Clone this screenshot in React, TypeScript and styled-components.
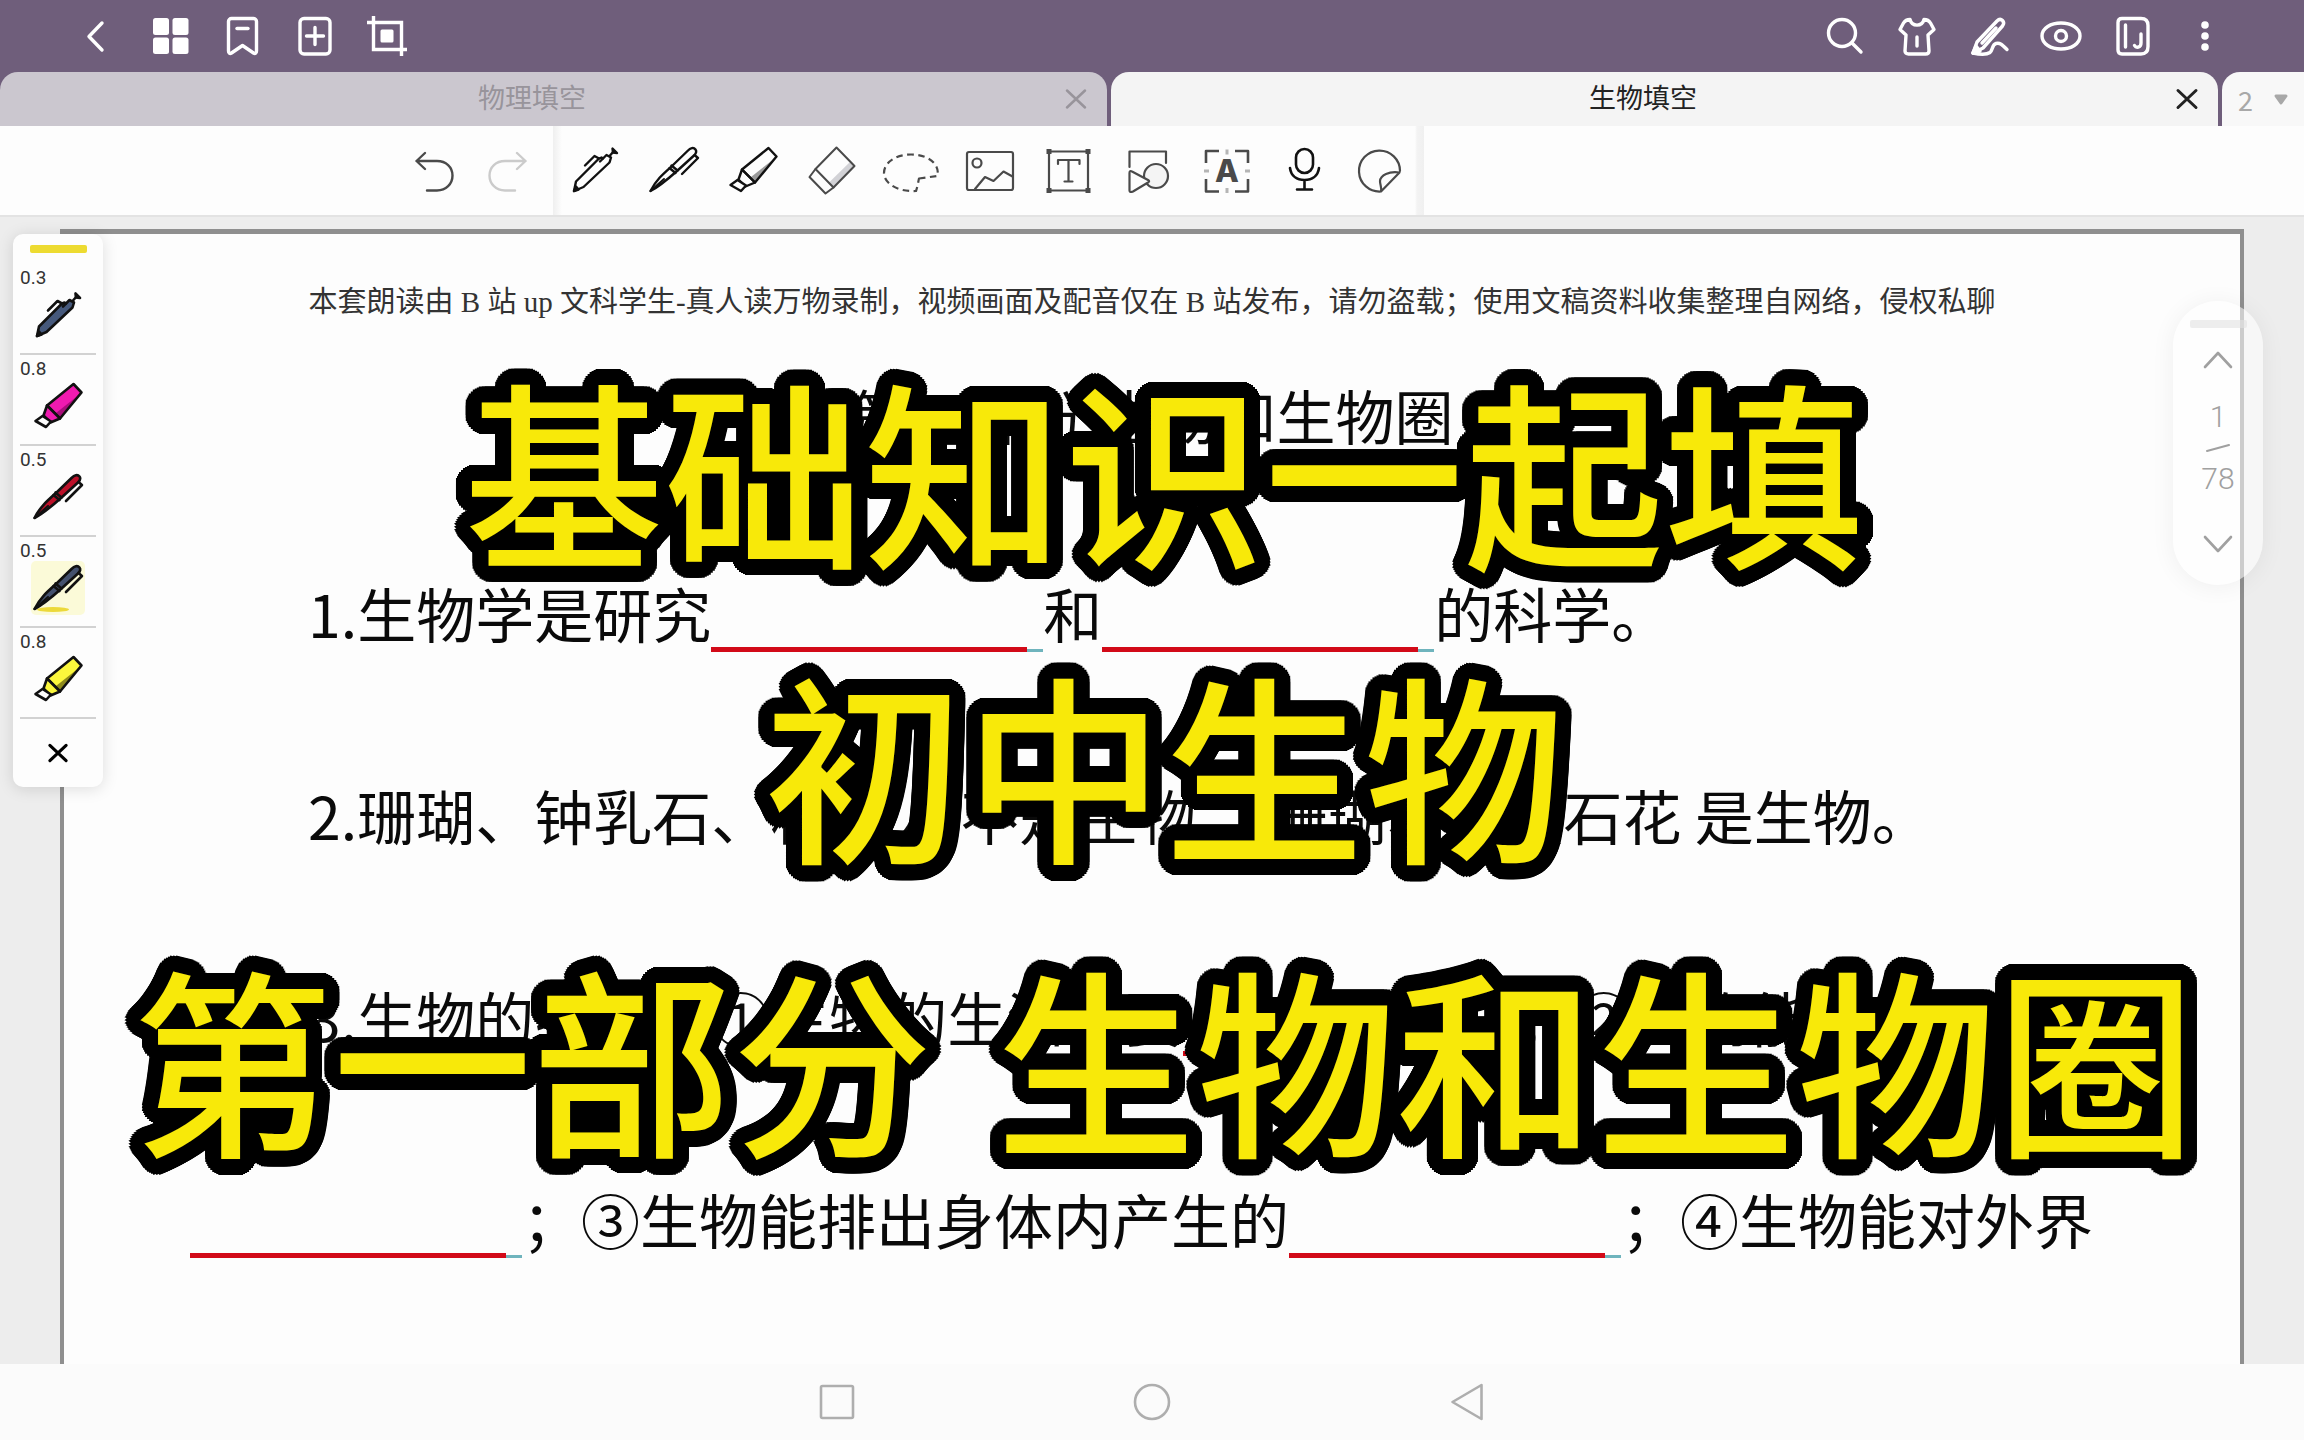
import React from "react";
import styled, { createGlobalStyle, css } from "styled-components";

const sans = `Roboto, "Noto Sans CJK SC", sans-serif`;
const docSans = `"Noto Sans CJK SC", "Noto Sans", sans-serif`;

const GlobalStyle = createGlobalStyle`
  *, *::before, *::after { box-sizing: border-box; }
  body { margin: 0; background: #fbfbfb; font-family: ${sans}; }
  button { margin: 0; padding: 0; border: 0; background: none; color: inherit; font: inherit; cursor: pointer; }
  p, h1, h2 { margin: 0; font-weight: 400; }
`;

const Screen = styled.div`
  position: relative;
  display: flex;
  flex-direction: column;
  height: 100vh;
  overflow: hidden;
`;

/* ---------- top bar ---------- */

const TopBar = styled.header`
  display: flex;
  justify-content: space-between;
  flex: none;
  height: 72px;
  padding: 0 63px;
  background: #6f5e7b;
  color: #fff;
`;

const Cluster = styled.div`
  display: flex;
`;

const IconButton = styled.button<{ $width: number }>`
  display: flex;
  align-items: center;
  justify-content: center;
  width: ${(p) => p.$width}px;
  height: 100%;
`;

const Icon = styled.svg<{ $size: number }>`
  display: block;
  flex: none;
  width: ${(p) => p.$size}px;
  height: ${(p) => p.$size}px;
  overflow: visible;
  fill: none;
  stroke: currentColor;
  stroke-linecap: round;
  stroke-linejoin: round;
`;

/* ---------- tabs ---------- */

const TabStrip = styled.nav`
  display: flex;
  flex: none;
  gap: 4px;
  height: 54px;
  background: #6f5e7b;
`;

const Tab = styled.div<{ $active?: boolean }>`
  display: flex;
  flex: 1;
  align-items: center;
  padding-right: 20px;
  border-radius: 18px 18px 0 0;
  background: ${(p) => (p.$active ? "#f4f4f4" : "#cbc7cf")};
  color: ${(p) => (p.$active ? "#222" : "#98949b")};
`;

const TabTitle = styled.button`
  flex: 1;
  height: 100%;
  font-size: 27px;
  line-height: 52px;
  text-align: center;
`;

const TabClose = styled.button`
  display: flex;
  align-items: center;
  justify-content: center;
  width: 23px;
  height: 100%;
`;

const TabCount = styled.button`
  display: flex;
  flex: none;
  align-items: center;
  justify-content: space-between;
  width: 82px;
  padding: 0 16px;
  border-radius: 18px 0 0 0;
  background: #f8f8f8;
  color: #a8a8a8;
  font-family: "Noto Sans CJK SC", sans-serif;
  font-size: 27px;
`;

/* ---------- toolbar ---------- */

const Toolbar = styled.div`
  display: flex;
  flex: none;
  height: 91px;
  border-bottom: 2px solid #e3e3e3;
  background: #fdfdfd;
  color: #4a4a4a;
`;

const History = styled.div`
  display: flex;
  padding: 0 9px 0 398px;
`;

const Tools = styled.div`
  display: flex;
  padding: 0 6px 0 2px;
  background: linear-gradient(to right, #efefef, rgba(253, 253, 253, 0) 9px),
    linear-gradient(to left, #f0f0f0, #f3f3f3 7px, rgba(253, 253, 253, 0) 9px);
`;

/* ---------- page ---------- */

const Workspace = styled.main`
  position: relative;
  display: flex;
  flex: 1;
  min-height: 0;
  padding: 12px 60px 0;
  background: #ededed;
`;

const Paper = styled.article`
  flex: 1;
  padding: 48px 126px 0;
  overflow: hidden;
  border: 4px solid #8f8f8f;
  border-top-width: 5px;
  border-bottom: 0;
  background: #fdfdfd;
  color: #0a0a0a;
  font-family: ${docSans};
`;

const Notice = styled.p`
  color: #333;
  font-family: "Liberation Serif", "Noto Sans CJK SC", serif;
  font-size: 29px;
  line-height: 40px;
  text-align: center;
  white-space: nowrap;
`;

const Heading = styled.h2`
  margin-bottom: 4px;
  font-size: 59px;
  line-height: 186px;
  text-align: center;
`;

const Question = styled.p`
  font-size: 59px;
  line-height: 202px;
  text-indent: 118px;
`;

const BlankLine = styled.span`
  display: inline-flex;
  align-items: flex-end;
  width: 332px;
  height: 5px;
  vertical-align: -14px;
  text-indent: 0;

  &::before {
    content: "";
    flex: 1;
    height: 5px;
    background: #d20a18;
  }

  &::after {
    content: "";
    width: 16px;
    height: 3px;
    background: #6fb4bd;
  }
`;

/* ---------- floating pen palette ---------- */

const Palette = styled.aside`
  position: absolute;
  top: 17px;
  left: 13px;
  width: 90px;
  padding: 11px 7px 0;
  border-radius: 10px;
  background: #fdfdfd;
  box-shadow: 0 2px 16px rgba(0, 0, 0, 0.13);
`;

const Grip = styled.div<{ $color: string }>`
  width: 57px;
  height: 8px;
  margin: 0 auto;
  border-radius: 2px;
  background: ${(p) => p.$color};
`;

const PenList = styled.div`
  padding-top: 11px;
`;

const PenSlot = styled.button`
  display: flex;
  flex-direction: column;
  width: 100%;
  height: 91px;
  padding-top: 4px;
  border-bottom: 2px solid #d2d2d2;
  color: #111;
  text-align: left;
`;

const PenSize = styled.span`
  color: #333;
  font-size: 19px;
  line-height: 20px;
`;

const PenArt = styled.span<{ $active?: boolean }>`
  display: flex;
  align-items: center;
  justify-content: center;
  align-self: center;
  width: 54px;
  height: 54px;
  border-radius: 5px;
  ${(p) =>
    p.$active &&
    css`
      background: #fbfad8;
    `}
`;

const PaletteClose = styled.button`
  display: flex;
  align-items: center;
  justify-content: center;
  width: 100%;
  height: 68px;
  color: #000;
`;

/* ---------- page counter ---------- */

const Pager = styled.aside`
  position: absolute;
  top: 84px;
  right: 41px;
  display: flex;
  flex-direction: column;
  align-items: center;
  width: 90px;
  height: 284px;
  padding-top: 19px;
  border-radius: 45px;
  background: rgba(255, 255, 255, 0.55);
  box-shadow: 0 2px 24px rgba(0, 0, 0, 0.06);
  color: #a0a0a0;
`;

const PagerArrow = styled.button<{ $height: number }>`
  display: flex;
  align-items: center;
  justify-content: center;
  width: 60px;
  height: ${(p) => p.$height}px;
`;

const PageNumber = styled.span`
  font-size: 30px;
  font-weight: 300;
  line-height: 50px;
`;

const Slash = styled.svg`
  display: block;
  width: 24px;
  height: 12px;
  fill: none;
  stroke: currentColor;
  stroke-linecap: round;
  stroke-width: 2;
`;

/* ---------- system navigation ---------- */

const NavBar = styled.footer`
  display: flex;
  flex: none;
  justify-content: center;
  height: 76px;
  background: #fbfbfb;
  color: #aeaeae;
`;

/* ---------- caption ---------- */

const Caption = styled.div`
  position: absolute;
  inset: 0;
  padding: 338px 0 0 24px;
  pointer-events: none;
`;

/* A ring of hard shadows gives the letters a thick outline with round corners. */
const outline = (radius: number, steps: number) =>
  Array.from({ length: steps }, (_, i) => {
    const angle = (i / steps) * Math.PI * 2;
    return `${Math.round(Math.cos(angle) * radius)}px ${Math.round(Math.sin(angle) * radius)}px 0 #000`;
  }).join(", ");

const CaptionLine = styled.h1`
  color: #f8e909;
  font-family: "DejaVu Sans", "Noto Sans CJK SC", sans-serif;
  font-size: 200px;
  font-weight: 500;
  line-height: 294px;
  text-align: center;
  text-shadow: ${outline(16, 40)};
  white-space: nowrap;
`;

/* ---------- drawings ---------- */

const Cross = ({ size, weight }: { size: number; weight: number }) => (
  <Icon $size={size} viewBox="0 0 20 20" strokeWidth={weight}>
    <path d="M1 1.500 19 18.500M19 1.500 1 18.500" />
  </Icon>
);

const topIcons: Record<string, React.ReactNode> = {
  返回: <path d="M27 11 14 24.500 27 38" />,
  缩略图: (
    <g fill="currentColor" stroke="none">
      <rect x="6" y="6" width="16" height="17" rx="2.500" />
      <rect x="25.500" y="6" width="16" height="17" rx="2.500" />
      <rect x="6" y="25.500" width="16" height="16.500" rx="2.500" />
      <rect x="25.500" y="25.500" width="16" height="16.500" rx="2.500" />
    </g>
  ),
  书签: (
    <>
      <path d="M9.500 39V9.500a3 3 0 0 1 3-3h22a3 3 0 0 1 3 3V39c0 2.500-1.500 3-3 2l-11-7.500-11 7.500c-1.500 1-3 .5-3-2Z" />
      <path d="M18 16.500h11" />
    </>
  ),
  添加页: (
    <>
      <rect x="9" y="6.500" width="30" height="35.500" rx="4" />
      <path d="M24 15.500v17M15.500 24h17" />
    </>
  ),
  裁剪: (
    <>
      <path strokeLinecap="butt" strokeLinejoin="miter" d="M4 10.500h34.500V44M10.500 4v33.500H44" />
      <rect x="17.500" y="17.500" width="13" height="13" rx="1.500" fill="currentColor" stroke="none" />
    </>
  ),
};

const topRightIcons: Record<string, React.ReactNode> = {
  搜索: (
    <>
      <circle cx="21" cy="21" r="13.500" />
      <path d="m31 31 9 9" />
    </>
  ),
  皮肤: (
    <>
      <path d="M17 7.500c2 7.500 12 7.500 14 0 3 0 5 1 6.500 3.500L41 17.500 35 23l1 16c0 2-1.500 3-3.500 3h-17c-2 0-3.500-1-3.500-3l1-16-6-5.500 3.500-6.500C12 8.500 14 7.500 17 7.500Z" />
      <path d="M24 25v9" />
    </>
  ),
  手写: (
    <>
      <path d="M8 41 12 30 32 9c2-2 4-2 5.500-.5s1.500 3.500 0 5.500L18 36 8 41Z" />
      <path d="m17 31 14-15M8 41c7 1.500 14 1.500 17-.5 3-2.500 2-8 6-9s6 1 11 6" />
      <path d="m8 41 3-7 4 5Z" fill="currentColor" />
    </>
  ),
  只读: (
    <>
      <path d="M5 24c0-8 9-13 19-13s19 5 19 13-9 13-19 13S5 32 5 24Z" />
      <circle cx="24" cy="24" r="5.500" />
    </>
  ),
  笔记本: (
    <>
      <path d="M13 6.500h19c5 0 7 3 7 7v21c0 5-2 7.500-7 7.500H13c-2.500 0-4-1.500-4-4v-27.500c0-2.500 1.500-4 4-4Z" />
      <path d="M16.500 13v22M32 22v9c0 5-5 5-6.500 2.500" />
    </>
  ),
  更多: (
    <g fill="currentColor" stroke="none">
      <circle cx="24" cy="13" r="3.800" />
      <circle cx="24" cy="24" r="3.800" />
      <circle cx="24" cy="35" r="3.800" />
    </g>
  ),
};

const Ballpoint = ({ fill = "none" }: { fill?: string }) => (
  <>
    <path fill={fill} d="M7 48 9 38.500 32 15.500l2.500-1 1.500 1 3.500-3.500 4.500 2.500-1.500 5L16.500 44 7 48Z" />
    <path d="M18 22.500l9.500-9.500 4.500 2.500M36 15.500l-3 3M43 12.500l4-4.500" />
    <path fill="currentColor" d="m45.500 5.500.5 4 4 .5Z" />
    <path d="m7 48 2-4.500 2.500 3Z" fill="currentColor" />
  </>
);

const Fountain = ({ fill = "#fdfdfd" }: { fill?: string }) => (
  <>
    <path fill={fill} d="M4.500 48C10 37 17 31 26 23L41.500 8c3-3 6-4 8-1.500 1.500 2 .5 4-1.500 6L31 28C22 36 14 43 4.500 48Z" />
    <path d="m25.500 22.500 6 5M23.500 25l6 5M48.500 12l3.500 3-16 16" />
    <path d="M4.500 48 18 36" strokeWidth="2" />
  </>
);

const Marker = ({ fill = "none", shade = "#9a9a9a" }: { fill?: string; shade?: string }) => (
  <>
    <path fill={fill} stroke="none" d="m43.500 5 8 8.500L30 39.500 17 26.500 43.500 5Z" />
    <path fill={shade} stroke="none" d="M50 15 30 38l-4-4Z" />
    <path d="m43.500 5 8 8.500L30 39.500 17 26.500 43.500 5Z" />
    <path fill={fill} d="m17 26.500-3.500 10 7 7 9.500-4L17 26.500Z" />
    <path fill="#fdfdfd" d="M12.500 37 5.500 42l10.500 6 5-5.500Z" />
  </>
);

const toolIcons: { name: string; width: number; art: React.ReactNode }[] = [
  { name: "圆珠笔", width: 79, art: <g stroke="#111" strokeWidth="2.400"><Ballpoint /></g> },
  { name: "钢笔", width: 79, art: <g stroke="#111" strokeWidth="2.400"><Fountain /></g> },
  { name: "荧光笔", width: 79, art: <g stroke="#111" strokeWidth="2.400"><Marker /></g> },
  {
    name: "橡皮",
    width: 79,
    art: (
      <g strokeWidth="2">
        <path fill="#d2d2d6" stroke="none" d="m46 19 4.500 4-21 22-5-5Z" />
        <path d="M32.500 4.500 50.500 23 29.500 44.500 11.500 26Z" />
        <path d="m11.500 26-6 8 16 16.500 8-6" />
      </g>
    ),
  },
  {
    name: "套索",
    width: 79,
    art: (
      <path
        strokeLinecap="butt"
        strokeDasharray="6.500 4.500"
        d="M36 35.500 54.500 33C57 20 44 11.500 28 11.500S1 20 1 30s13 19 32 18c1.500-4 2-8 3-12.500Z"
      />
    ),
  },
  {
    name: "图片",
    width: 79,
    art: (
      <>
        <rect x="5" y="9" width="46" height="38" rx="2" />
        <circle cx="15" cy="20" r="4.500" />
        <path d="m13 46 10-12 8.500 4 10-9.500 9 5" />
      </>
    ),
  },
  {
    name: "文本",
    width: 79,
    art: (
      <>
        <rect x="8" y="8.500" width="39" height="39" />
        <g fill="currentColor" stroke="none">
          <rect x="5.500" y="6" width="5" height="5" />
          <rect x="44.500" y="6" width="5" height="5" />
          <rect x="5.500" y="45" width="5" height="5" />
          <rect x="44.500" y="45" width="5" height="5" />
        </g>
        <path d="M17 21v-4h21.500v4M27.500 17v21.500M23.500 38.500h8" />
      </>
    ),
  },
  {
    name: "图形",
    width: 79,
    art: (
      <>
        <path d="M9.500 24V8.500H46V20" />
        <circle cx="36" cy="33" r="12" fill="#f4f4f4" />
        <path
          fill="#fdfdfd"
          d="M9.500 30c0-2 1-2.500 2.500-1.500L28 37c1.500 1 1.500 1.500 0 2.500L13 48.500c-2.500 1-3.500.5-3.500-1Z"
        />
      </>
    ),
  },
  {
    name: "识别",
    width: 79,
    art: (
      <>
        <path strokeLinecap="butt" strokeWidth="2.600" d="M7 20V8h13M36 8h13v12M49 36v12.500H36M20 48.500H7V36" />
        <path stroke="#b5b5b5" strokeLinecap="butt" strokeWidth="3" d="M28 6.500v5M28 45v5M5 28h5M46 28h5" />
        <text x="28" y="39" textAnchor="middle" fontFamily="Inter, sans-serif" fontSize="31" fontWeight="800" fill="currentColor" stroke="none">A</text>
      </>
    ),
  },
  {
    name: "录音",
    width: 76,
    art: (
      <g stroke="#111" strokeWidth="2.600">
        <rect x="20" y="6" width="17" height="24" rx="8.500" />
        <path d="M14 25c1 8 7 12 14.500 12S42 33 43 25M28.500 37v9M21 46.500h15" />
      </g>
    ),
  },
  {
    name: "贴纸",
    width: 76,
    art: <path d="M48 28A20.500 20.500 0 1 0 29 48.500l18.500-19C37 28 28.500 32 28 38c0 4 2 7 1 10.500" />,
  },
];

const pens = [
  { size: "0.3", color: "#46597c", art: "ball" },
  { size: "0.8", color: "#f01ab0", shade: "#a90d7b", art: "marker" },
  { size: "0.5", color: "#bb1029", art: "fountain" },
  { size: "0.5", color: "#44516e", art: "fountain", active: true },
  { size: "0.8", color: "#fbf73c", shade: "#8f8b1c", art: "marker" },
];

const Blank = () => <BlankLine role="img" aria-label="填空" />;

export default function App() {
  return (
    <Screen>
      <GlobalStyle />

      <TopBar>
        <Cluster>
          {Object.entries(topIcons).map(([name, art]) => (
            <IconButton key={name} $width={72} aria-label={name}>
              <Icon $size={48} viewBox="0 0 48 48" strokeWidth="3.400">{art}</Icon>
            </IconButton>
          ))}
        </Cluster>
        <Cluster>
          {Object.entries(topRightIcons).map(([name, art]) => (
            <IconButton key={name} $width={72} aria-label={name}>
              <Icon $size={48} viewBox="0 0 48 48" strokeWidth="3.400">{art}</Icon>
            </IconButton>
          ))}
        </Cluster>
      </TopBar>

      <TabStrip>
        <Tab>
          <TabTitle>物理填空</TabTitle>
          <TabClose aria-label="关闭 物理填空"><Cross size={20} weight={2.5} /></TabClose>
        </Tab>
        <Tab $active>
          <TabTitle>生物填空</TabTitle>
          <TabClose aria-label="关闭 生物填空"><Cross size={20} weight={3} /></TabClose>
        </Tab>
        <TabCount>
          2
          <Icon $size={14} viewBox="0 0 14 14" strokeWidth="3">
            <path fill="currentColor" d="M2 4h10l-5 7Z" />
          </Icon>
        </TabCount>
      </TabStrip>

      <Toolbar>
        <History>
          <IconButton $width={73} aria-label="撤销">
            <Icon $size={56} viewBox="0 0 56 56" strokeWidth="2.400">
              <path d="M18 10 9.500 18 18 26M9.500 18H30c9 0 15.500 6 15.500 14.500S39 47.500 30 47.500H20" />
            </Icon>
          </IconButton>
          <IconButton $width={73} aria-label="重做" disabled>
            <Icon $size={56} viewBox="0 0 56 56" strokeWidth="2.400" color="#cbcbcb">
              <path d="M37 10 45.500 18 37 26M45.500 18H25C16 18 9.500 24 9.500 32.500S16 47.500 25 47.500H35" />
            </Icon>
          </IconButton>
        </History>
        <Tools>
          {toolIcons.map((tool) => (
            <IconButton key={tool.name} $width={tool.width} aria-label={tool.name}>
              <Icon $size={56} viewBox="0 0 56 56" strokeWidth="2.200">{tool.art}</Icon>
            </IconButton>
          ))}
        </Tools>
      </Toolbar>

      <Workspace>
        <Paper>
          <Notice>
            本套朗读由 B 站 up 文科学生-真人读万物录制，视频画面及配音仅在 B 站发布，请勿盗载；使用文稿资料收集整理自网络，侵权私聊
          </Notice>
          <Heading>第一部分 生物和生物圈</Heading>
          <Question>1.生物学是研究<Blank />和<Blank />的科学。</Question>
          <Question>2.珊瑚、钟乳石、机器人 不是生物， 珊瑚、昆虫石花 是生物。</Question>
          <Question>
            3.生物的特征：①生物的生活需要<Blank />；②生物能进行<Blank />；③生物能排出身体内产生的<Blank />；④生物能对外界
          </Question>
        </Paper>

        <Palette aria-label="常用笔">
          <Grip $color="#eddb31" />
          <PenList>
            {pens.map((pen, i) => (
              <PenSlot key={i}>
                <PenSize>{pen.size}</PenSize>
                <PenArt $active={pen.active}>
                  <Icon $size={54} viewBox="1 0 54 54" strokeWidth="2.600">
                    {pen.active && <ellipse cx="23" cy="48.500" rx="16" ry="2.500" fill="#ecd93a" stroke="none" />}
                    {pen.art === "ball" && <Ballpoint fill={pen.color} />}
                    {pen.art === "fountain" && <Fountain fill={pen.color} />}
                    {pen.art === "marker" && <Marker fill={pen.color} shade={pen.shade} />}
                  </Icon>
                </PenArt>
              </PenSlot>
            ))}
          </PenList>
          <PaletteClose aria-label="关闭常用笔"><Cross size={18} weight={3.5} /></PaletteClose>
        </Palette>

        <Pager aria-label="页码">
          <Grip $color="rgba(225, 225, 225, 0.6)" />
          <PagerArrow $height={64} aria-label="上一页">
            <Icon $size={28} viewBox="0 0 28 28" strokeWidth="2.600"><path d="M1 21 14 7l13 14" /></Icon>
          </PagerArrow>
          <PageNumber>1</PageNumber>
          <Slash viewBox="0 0 24 12"><path d="M1 9 23 3" /></Slash>
          <PageNumber>78</PageNumber>
          <PagerArrow $height={80} aria-label="下一页">
            <Icon $size={28} viewBox="0 0 28 28" strokeWidth="2.600"><path d="M1 7l13 14L27 7" /></Icon>
          </PagerArrow>
        </Pager>
      </Workspace>

      <NavBar>
        <IconButton $width={315} aria-label="最近任务">
          <Icon $size={38} viewBox="0 0 38 38" strokeWidth="2.600"><rect x="3" y="3" width="32" height="32" rx="1.500" /></Icon>
        </IconButton>
        <IconButton $width={315} aria-label="主屏幕">
          <Icon $size={38} viewBox="0 0 38 38" strokeWidth="2.600"><circle cx="19" cy="19" r="17" /></Icon>
        </IconButton>
        <IconButton $width={315} aria-label="后退">
          <Icon $size={38} viewBox="0 0 38 38" strokeWidth="2.600"><path d="M33.500 2v34L4.500 19Z" /></Icon>
        </IconButton>
      </NavBar>

      <Caption>
        <CaptionLine>基础知识一起填</CaptionLine>
        <CaptionLine>初中生物</CaptionLine>
        <CaptionLine>第一部分 生物和生物圈</CaptionLine>
      </Caption>
    </Screen>
  );
}
